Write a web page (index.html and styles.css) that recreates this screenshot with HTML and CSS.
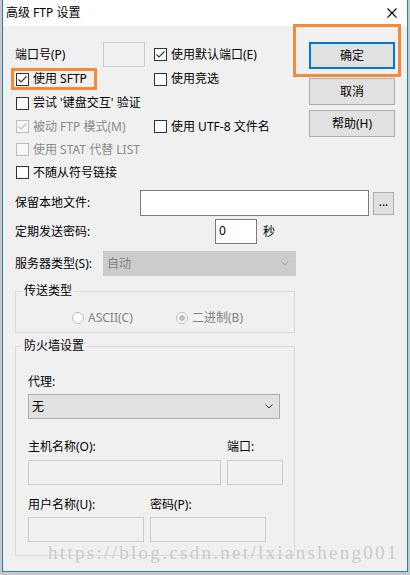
FILE: index.html
```html
<!DOCTYPE html>
<html lang="zh">
<head>
    <meta charset="UTF-8">
    <meta name="viewport" content="width=device-width, initial-scale=1.0">
    <title>高级 FTP 设置</title>
    <link rel="stylesheet" href="styles.css">
</head>
<body>
    <div class="window">
        <!-- 标题栏 -->
        <div class="titlebar">
            <span class="title">高级 FTP 设置</span>
            <svg class="close" width="10" height="10" viewBox="0 0 10 10">
                <path d="M0.5 0.5 L9.5 9.5 M9.5 0.5 L0.5 9.5" stroke="#000" stroke-width="1.1" fill="none"/>
            </svg>
        </div>

        <div class="client">
            <!-- 顶部选项和按钮 -->
            <div class="top">
                <div class="opts">
                    <div class="port-field">
                        <span class="port-label">端口号(P)</span>
                        <span class="input input-disabled port-input"></span>
                    </div>
                    <label class="check">
                        <span class="box"><svg width="11" height="11" viewBox="0 0 11 11"><polyline points="1.5,5.5 4,8 9.5,2.5" fill="none" stroke="#333" stroke-width="1.1"/></svg></span>
                        使用默认端口(E)
                    </label>

                    <label class="check first">
                        <span class="box"><svg width="11" height="11" viewBox="0 0 11 11"><polyline points="1.5,5.5 4,8 9.5,2.5" fill="none" stroke="#333" stroke-width="1.1"/></svg></span>
                        使用 SFTP
                    </label>
                    <label class="check">
                        <span class="box"></span>
                        使用竞选
                    </label>

                    <label class="check first wide">
                        <span class="box"></span>
                        尝试 '键盘交互' 验证
                    </label>

                    <label class="check first disabled">
                        <span class="box"><svg width="11" height="11" viewBox="0 0 11 11"><polyline points="1.5,5.5 4,8 9.5,2.5" fill="none" stroke="#bcbcbc" stroke-width="1.1"/></svg></span>
                        被动 FTP 模式(M)
                    </label>
                    <label class="check">
                        <span class="box"></span>
                        使用 UTF-8 文件名
                    </label>

                    <label class="check first wide disabled">
                        <span class="box"></span>
                        使用 STAT 代替 LIST
                    </label>

                    <label class="check first wide">
                        <span class="box"></span>
                        不随从符号链接
                    </label>
                </div>

                <div class="buttons">
                    <button class="btn btn-default">确定</button>
                    <button class="btn btn-cancel">取消</button>
                    <button class="btn btn-help">帮助(H)</button>
                </div>
            </div>

            <!-- 本地文件/密码/服务器 -->
            <div class="fields">
                <div class="field-row row-local">
                    <span class="label">保留本地文件:</span>
                    <span class="input local-input"></span>
                    <button class="btn browse">...</button>
                </div>
                <div class="field-row row-keep">
                    <span class="label">定期发送密码:</span>
                    <span class="input keep-input">0</span>
                    <span class="unit">秒</span>
                </div>
                <div class="field-row row-server">
                    <span class="label">服务器类型(S):</span>
                    <span class="select select-disabled server-select">
                        自动
                        <svg width="8" height="5" viewBox="0 0 8 5"><polyline points="0.5,0.5 4,4 7.5,0.5" fill="none" stroke="#a6a6a6" stroke-width="1"/></svg>
                    </span>
                </div>
            </div>

            <!-- 传送类型 -->
            <fieldset class="group transfer">
                <legend>传送类型</legend>
                <div class="transfer-body">
                    <span class="radio ascii"><span class="dot"></span>ASCII(C)</span>
                    <span class="radio on"><span class="dot"><span class="pip"></span></span>二进制(B)</span>
                </div>
            </fieldset>

            <!-- 防火墙设置 -->
            <fieldset class="group firewall">
                <legend>防火墙设置</legend>
                <div class="firewall-body">
                    <div class="label">代理:</div>
                    <div class="select proxy-select">
                        无
                        <svg width="8" height="5" viewBox="0 0 8 5"><polyline points="0.5,0.5 4,4 7.5,0.5" fill="none" stroke="#333" stroke-width="1"/></svg>
                    </div>

                    <div class="pair host-pair">
                        <div class="col host-col">
                            <div class="label">主机名称(O):</div>
                            <span class="input input-disabled"></span>
                        </div>
                        <div class="col port-col">
                            <div class="label">端口:</div>
                            <span class="input input-disabled"></span>
                        </div>
                    </div>

                    <div class="pair user-pair">
                        <div class="col user-col">
                            <div class="label">用户名称(U):</div>
                            <span class="input input-disabled"></span>
                        </div>
                        <div class="col pass-col">
                            <div class="label">密码(P):</div>
                            <span class="input input-disabled"></span>
                        </div>
                    </div>
                </div>
            </fieldset>
        </div>

        <!-- 标注框和水印 -->
        <div class="mark mark-sftp"></div>
        <div class="mark mark-ok"></div>
        <div class="watermark">https://blog.csdn.net/lxiansheng001</div>
    </div>
</body>
</html>
```

FILE: styles.css
```css
* {
    margin: 0;
    padding: 0;
    box-sizing: border-box;
}

body {
    background: #c8c8c8;
    font-family: "Noto Sans", "Noto Sans CJK SC", sans-serif;
    font-size: 12px;
    line-height: 16px;
    color: #000;
}

.window {
    position: relative;
    width: 406px;
    height: 572px;
    margin-left: 2px;
    background: #f0f0f0;
    border: 1px solid #1883d7;
    border-top: none;
    overflow: hidden;
}

/* 标题栏 */
.titlebar {
    height: 26px;
    background: #fff;
    display: flex;
    align-items: center;
    justify-content: space-between;
    padding: 0 10px 0 3px;
}

.client {
    padding: 16px 0 0 12px;
}

/* 顶部选项 */
.top {
    display: flex;
}

.opts {
    display: grid;
    grid-template-columns: 139px 140px;
    grid-template-rows: 25px 24px 24px 23px 23px 23px;
}

.port-field {
    display: flex;
    align-items: center;
}

.port-label {
    width: 88px;
}

.port-input {
    width: 42px;
    height: 25px;
}

.check {
    display: flex;
    align-items: center;
    gap: 4px;
    white-space: nowrap;
}

.check.first {
    padding-left: 1px;
    grid-column: 1;
}

.check.wide {
    grid-column: 1 / -1;
}

.check.disabled {
    color: #8a8a8a;
}

.box {
    flex: none;
    width: 13px;
    height: 13px;
    border: 1px solid #333;
    background: #fff;
    display: flex;
}

.check.disabled .box {
    border-color: #bcbcbc;
    background: #f7f7f7;
}

/* 按钮 */
.buttons {
    margin-left: 15px;
    width: 86px;
    display: flex;
    flex-direction: column;
}

.btn {
    font: inherit;
    color: #000;
    background: #e1e1e1;
    border: 1px solid #adadad;
    display: flex;
    align-items: center;
    justify-content: center;
}

.buttons .btn {
    height: 27px;
}

.btn-default {
    border: 2px solid #0078d7;
}

.btn-cancel {
    margin-top: 9px;
}

.btn-help {
    margin-top: 5px;
}

/* 输入框 */
.input {
    display: block;
    flex: none;
    background: #fff;
    border: 1px solid #7a7a7a;
    height: 25px;
}

.input-disabled {
    background: #f0f0f0;
    border-color: #cccccc;
}

.fields {
    margin-top: 6px;
}

.field-row {
    display: flex;
    align-items: center;
}

.field-row .label {
    flex: none;
}

.row-local .label {
    width: 125px;
}

.local-input {
    width: 229px;
    height: 26px;
}

.browse {
    margin-left: 4px;
    width: 21px;
    height: 23px;
    line-height: 10px;
    padding-bottom: 2px;
}

.row-keep {
    margin-top: 3px;
}

.row-keep .label {
    width: 200px;
}

.keep-input {
    width: 42px;
    padding: 3px 0 0 3px;
}

.unit {
    margin-left: 6px;
}

.row-server {
    margin-top: 7px;
}

.row-server .label {
    width: 88px;
}

.select {
    display: flex;
    align-items: center;
    justify-content: space-between;
    height: 25px;
    border: 1px solid #adadad;
    background: #e1e1e1;
    padding: 0 6px 0 3px;
}

.select-disabled {
    background: #cccccc;
    border-color: #cccccc;
    color: #838383;
}

.server-select {
    width: 193px;
}

/* 分组框 */
.group {
    width: 280px;
    margin: 0;
    padding: 0;
    min-width: 0;
    border: 1px solid #dcdcdc;
}

.group legend {
    margin-left: 6px;
    padding: 0 2px;
    line-height: 16px;
}

.transfer {
    margin-top: 7px;
}

.transfer-body {
    display: flex;
    padding: 11px 0 6px 56px;
}

.radio {
    display: flex;
    align-items: center;
    gap: 4px;
    color: #838383;
}

.radio.ascii {
    width: 104px;
}

.dot {
    width: 12px;
    height: 12px;
    border-radius: 50%;
    border: 1px solid #bcbcbc;
    background: #fff;
    display: flex;
    align-items: center;
    justify-content: center;
}

.pip {
    width: 6px;
    height: 6px;
    border-radius: 50%;
    background: #bcbcbc;
}

.firewall {
    margin-top: 5px;
}

.firewall-body {
    padding: 20px 0 13px 12px;
}

.proxy-select {
    width: 252px;
    margin-top: 4px;
}

.pair {
    display: flex;
    gap: 6px;
}

.host-pair {
    margin-top: 20px;
}

.host-pair .input {
    margin-top: 5px;
}

.host-col {
    width: 193px;
}

.port-col {
    width: 56px;
}

.user-pair {
    margin-top: 12px;
}

.user-pair .input {
    margin-top: 4px;
}

.user-col,
.pass-col {
    width: 116px;
}

/* 标注和水印 */
.mark {
    position: absolute;
    border: 3px solid #f5883b;
}

.mark-sftp {
    left: 8px;
    top: 68px;
    width: 86px;
    height: 22px;
}

.mark-ok {
    left: 290px;
    top: 24px;
    width: 108px;
    height: 53px;
}

.watermark {
    position: absolute;
    left: 45px;
    top: 543px;
    font-family: "Liberation Serif", serif;
    font-size: 19px;
    line-height: 20px;
    letter-spacing: 2.3px;
    color: #cbcbcb;
    white-space: nowrap;
}
```
